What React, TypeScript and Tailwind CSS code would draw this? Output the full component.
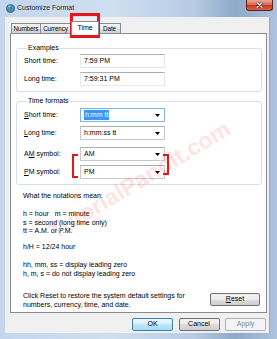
import React from "react";

function Arrow() {
  return (
    <svg width="5" height="3" viewBox="0 0 5 3" className="absolute right-[4px] top-[5.5px]">
      <path d="M0 0h5L2.5 3z" fill="#000" />
    </svg>
  );
}

function Field({ children }: { children: React.ReactNode }) {
  return (
    <div className="w-[85px] h-[14px] bg-white border border-[#e3e9ef] border-t-[#abadb3] flex items-center pl-[3px]">
      {children}
    </div>
  );
}

function Combo({ children, focus }: { children: React.ReactNode; focus?: boolean }) {
  return (
    <div
      className={
        focus
          ? "relative w-[85px] h-[14px] bg-white border border-[#7eb4ea] flex items-center pl-[3px]"
          : "relative w-[85px] h-[14px] bg-white border border-[#c5c9cf] border-t-[#abadb3] flex items-center pl-[3px]"
      }
    >
      {children}
      <Arrow />
    </div>
  );
}

function Row({ label, children }: { label: React.ReactNode; children: React.ReactNode }) {
  return (
    <div className="flex items-center">
      <div className="w-[56px]">{label}</div>
      {children}
    </div>
  );
}

function Btn({ children, kind }: { children: React.ReactNode; kind?: "default" | "disabled" }) {
  if (kind === "default")
    return (
      <div className="w-[41px] h-[13px] rounded-[2px] border border-[#3c7fb1] bg-[linear-gradient(#eaf6fd,#d9f0fc_50%,#bee6fd_50%,#a7d9f5)] flex items-center justify-center">
        {children}
      </div>
    );
  if (kind === "disabled")
    return (
      <div className="w-[41px] h-[13px] rounded-[2px] border border-[#adb2b5] bg-[#f4f4f4] text-[#838383] flex items-center justify-center">
        {children}
      </div>
    );
  return (
    <div className="w-[41px] h-[13px] rounded-[2px] border border-[#707070] bg-[linear-gradient(#f2f2f2,#ebebeb_50%,#dddddd_50%,#cfcfcf)] flex items-center justify-center">
      {children}
    </div>
  );
}

export default function App() {
  return (
    <div className="relative w-[277px] h-[339px] overflow-hidden flex flex-col font-['Liberation_Sans',Arial,sans-serif] text-[7px] leading-[8.6px] text-black bg-[linear-gradient(90deg,#c3d6ec,#cfdff1_40%,#b6cbe4_70%,#8fa9c9_85%,#adc3de)]">
      {/* title bar */}
      <div className="relative h-[17px] shrink-0 flex items-center">
        <svg width="9" height="9" viewBox="0 0 10 10" className="ml-[6px]">
          <circle cx="5" cy="5" r="4.5" fill="#3b86d0" stroke="#1d4f8a" strokeWidth="0.6" />
          <path d="M2 3.2c1-.8 2-.3 2.4.5.3.8-.6 1.2-.3 2 .3.8-.6 1.6-1.2 1.2C2.3 6.2 1.6 4.4 2 3.2zM6 2c.9.2 1.8 1 2 2-.6.2-1.2-.3-1.600-.7C6 2.9 5.7 2.4 6 2zM6.2 5.6c.7-.2 1.6.3 1.5 1-.3.8-1.2 1.200-1.6.8-.3-.5-.4-1.4.1-1.8z" fill="#57b33e" />
          <ellipse cx="3.6" cy="2.6" rx="1.6" ry="0.8" fill="#fff" opacity="0.45" />
        </svg>
        <span className="ml-[2px] text-[#1e1e1e]">Customize Format</span>
        <div className="absolute left-[246px] top-0 w-[27px] h-[11px] rounded-b-[3px] border border-t-0 border-[#5e2318] bg-[linear-gradient(#eaa597,#d86b55_45%,#c7381f_55%,#d7644a)] flex items-center justify-center">
          <svg width="7" height="6" viewBox="0 0 7 6">
            <path d="M1 0.8l5 4.4M6 0.8l-5 4.4" stroke="#3a1a14" strokeWidth="2.4" strokeLinecap="round" />
            <path d="M1 0.8l5 4.4M6 0.8l-5 4.4" stroke="#fff" strokeWidth="1.3" strokeLinecap="round" />
          </svg>
        </div>
      </div>

      {/* frame + client */}
      <div className="flex-1 flex pl-[5px] pr-[7px] pb-[6px]">
        <div className="flex-1 bg-[#f0f0f0] border-r border-[#a0a8b4] flex flex-col">
          {/* tabs */}
          <div className="h-[17px] pt-[3px] pl-[6px] flex items-end text-[6.3px] tracking-[-0.1px]">
            <div className="w-[30px] h-[11px] border border-b-0 border-[#898c95] bg-[linear-gradient(#f3f3f3,#ebebeb_50%,#dddddd_50%,#cfcfcf)] flex items-center justify-center">
              Numbers
            </div>
            <div className="w-[30px] h-[11px] border border-b-0 border-l-0 border-[#898c95] bg-[linear-gradient(#f3f3f3,#ebebeb_50%,#dddddd_50%,#cfcfcf)] flex items-center justify-center">
              Currency
            </div>
            <div className="relative z-10 w-[28px] h-[14px] -mb-px border border-b-0 border-[#898c95] bg-white flex items-center justify-center text-[7px]">
              Time
            </div>
            <div className="w-[22px] h-[11px] border border-b-0 border-l-0 border-[#898c95] bg-[linear-gradient(#f3f3f3,#ebebeb_50%,#dddddd_50%,#cfcfcf)] flex items-center justify-center">
              Date
            </div>
          </div>

          {/* panel */}
          <div className="-mt-px ml-[5px] w-[257px] h-[280px] bg-white border border-[#898c95] flex flex-col">
            <fieldset className="mt-[10px] ml-[5px] w-[246px] border border-[#d5dfe5] rounded-[3px] pl-[7px] pb-[5px] pt-[1.4px] flex flex-col gap-[4px]">
              <legend className="ml-[3px] px-[1px]">Examples</legend>
              <Row label="Short time:">
                <Field>7:59 PM</Field>
              </Row>
              <Row label="Long time:">
                <Field>7:59:31 PM</Field>
              </Row>
            </fieldset>

            <fieldset className="mt-[5px] ml-[5px] w-[246px] border border-[#d5dfe5] rounded-[3px] pl-[7px] pb-[5px] pt-[2.4px] flex flex-col">
              <legend className="ml-[3px] px-[1px]">Time formats</legend>
              <Row
                label={
                  <>
                    <span className="underline">S</span>hort time:
                  </>
                }
              >
                <Combo focus>
                  <span className="bg-[#3399ff] text-white px-[1px] leading-[10px]">h:mm tt</span>
                </Combo>
              </Row>
              <div className="mt-[4px]">
                <Row
                  label={
                    <>
                      <span className="underline">L</span>ong time:
                    </>
                  }
                >
                  <Combo>h:mm:ss tt</Combo>
                </Row>
              </div>
              <div className="mt-[7px]">
                <Row
                  label={
                    <>
                      A<span className="underline">M</span> symbol:
                    </>
                  }
                >
                  <Combo>AM</Combo>
                </Row>
              </div>
              <div className="mt-[4px]">
                <Row
                  label={
                    <>
                      <span className="underline">P</span>M symbol:
                    </>
                  }
                >
                  <Combo>PM</Combo>
                </Row>
              </div>
            </fieldset>

            <div className="pl-[12px] flex flex-col">
              <p className="mt-[6.7px]">What the notations mean:</p>
              <div className="mt-[9.7px]">
                <p>h = hour&nbsp;&nbsp; m = minute</p>
                <p>s = second (long time only)</p>
                <p>tt = A.M. or P.M.</p>
              </div>
              <p className="mt-[7.6px]">h/H = 12/24 hour</p>
              <div className="mt-[9.4px]">
                <p>hh, mm, ss = display leading zero</p>
                <p>h, m, s = do not display leading zero</p>
              </div>
              <div className="mt-[13.8px] flex items-start justify-between pr-[6px]">
                <p>
                  Click Reset to restore the system default settings for
                  <br />
                  numbers, currency, time, and date.
                </p>
                <div className="mt-[0.6px] w-[50px]">
                  <div className="w-[50px] h-[13px] rounded-[2px] border border-[#707070] bg-[linear-gradient(#f2f2f2,#ebebeb_50%,#dddddd_50%,#cfcfcf)] flex items-center justify-center">
                    <span>
                      <span className="underline">R</span>eset
                    </span>
                  </div>
                </div>
              </div>
            </div>
          </div>

          {/* buttons */}
          <div className="mt-[5px] pr-[3px] flex justify-end gap-[5.5px]">
            <Btn kind="default">OK</Btn>
            <Btn>Cancel</Btn>
            <Btn kind="disabled">Apply</Btn>
          </div>
        </div>
      </div>

      {/* annotations */}
      <div className="absolute left-[70px] top-[13px] w-[30px] h-[25px] border-[3px] border-[#e8141b] pointer-events-none" />
      <div className="absolute left-[72px] top-[154px] w-[6px] h-[24px] border-[2px] border-r-0 border-[#e8141b] pointer-events-none" />
      <div className="absolute left-[163px] top-[154px] w-[6px] h-[21px] border-[2px] border-l-0 border-[#e8141b] pointer-events-none" />
      <div className="absolute left-[140px] top-[180px] -translate-x-1/2 -translate-y-1/2 -rotate-[31deg] whitespace-nowrap text-[23px] leading-none font-bold text-[#ff2020]/15 pointer-events-none">
        TutorialPandit.com
      </div>
    </div>
  );
}
